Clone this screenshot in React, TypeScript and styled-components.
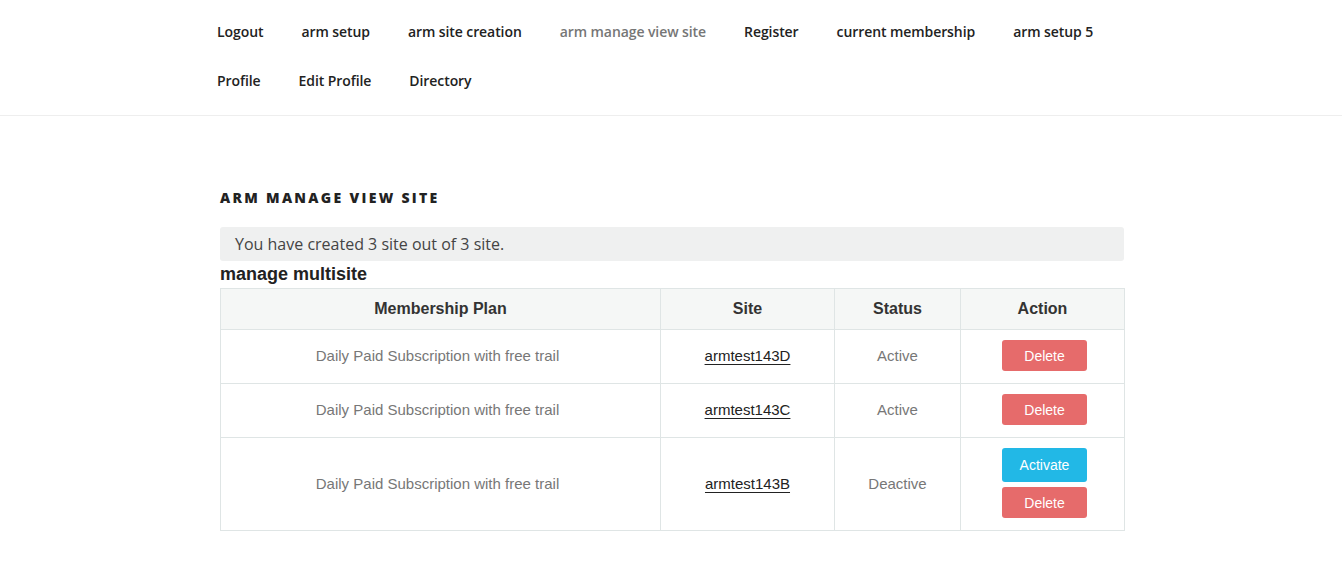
import React from "react";
import styled, { createGlobalStyle } from "styled-components";

const Global = createGlobalStyle`
  html, body { margin: 0; padding: 0; background: #fff; }
  body { font-family: "Open Sans", "Noto Sans", sans-serif; color: #333; }
  * { box-sizing: border-box; }
`;

const Header = styled.header`
  border-bottom: 1px solid #eee;
  padding: 7px 0 10px;
`;

const NavList = styled.ul`
  list-style: none;
  margin: 0 0 0 198px;
  padding: 0;
  width: 952px;
  display: flex;
  flex-wrap: wrap;
`;

const NavItem = styled.li<{ $active?: boolean }>`
  padding: 14px 19px;
  font-size: 14px;
  line-height: 21px;
  font-weight: 600;
  letter-spacing: -0.08px;
  color: ${(p) => (p.$active ? "#767676" : "#222")};
  white-space: nowrap;
`;

const Main = styled.main`
  width: 904px;
  margin: 0 0 0 220px;
  padding-top: 71px;
`;

const PageTitle = styled.h2`
  margin: 0 0 18px;
  font-size: 14px;
  line-height: 22px;
  font-weight: 800;
  letter-spacing: 0.165em;
  text-transform: uppercase;
  color: #222;
`;

const Notice = styled.div`
  background: #eff0f0;
  border-radius: 3px;
  height: 34px;
  padding: 0 15px;
  display: flex;
  align-items: center;
  font-size: 16px;
  color: #444;
`;

const SubTitle = styled.h3`
  margin: 3px 0 4px;
  font-family: "Liberation Sans", Arial, sans-serif;
  font-size: 18px;
  line-height: 20px;
  font-weight: 700;
  color: #222;
`;

const Table = styled.table`
  width: 904px;
  border-collapse: collapse;
  font-family: "Liberation Sans", Arial, sans-serif;
  table-layout: fixed;
`;

const Th = styled.th<{ $w: number }>`
  width: ${(p) => p.$w}px;
  height: 41px;
  background: #f5f7f6;
  border: 1px solid #dfe5e5;
  font-size: 16px;
  font-weight: 700;
  color: #333;
  text-align: center;
  padding: 0 8px;
`;

const Td = styled.td<{ $shift?: number }>`
  border: 1px solid #dfe5e5;
  text-align: center;
  font-size: 15px;
  color: #777;
  padding: 10px ${(p) => 8 + (p.$shift ?? 0)}px 12px ${(p) => 8 - (p.$shift ?? 0)}px;
  height: 54px;
`;

const SiteLink = styled.a`
  color: #222;
  text-decoration: underline;
  text-underline-offset: 3px;
`;

const Actions = styled.div`
  display: flex;
  flex-direction: column;
  align-items: center;
  gap: 5px;
`;

const Btn = styled.button<{ $kind: "delete" | "activate" }>`
  width: 85px;
  height: ${(p) => (p.$kind === "activate" ? 34 : 31)}px;
  border: none;
  border-radius: 3px;
  background: ${(p) => (p.$kind === "activate" ? "#22b8e6" : "#e66b6b")};
  color: #fff;
  font-family: "Liberation Sans", Arial, sans-serif;
  font-size: 14px;
  cursor: pointer;
  padding: 0;
`;

const navTop = [
  "Logout",
  "arm setup",
  "arm site creation",
  "arm manage view site",
  "Register",
  "current membership",
  "arm setup 5",
  "Profile",
  "Edit Profile",
  "Directory",
];

const rows = [
  { site: "armtest143D", status: "Active", active: true },
  { site: "armtest143C", status: "Active", active: true },
  { site: "armtest143B", status: "Deactive", active: false },
];

export default function App() {
  return (
    <>
      <Global />
      <Header>
        <nav>
          <NavList>
            {navTop.map((n) => (
              <NavItem key={n} $active={n === "arm manage view site"}>
                {n}
              </NavItem>
            ))}
          </NavList>
        </nav>
      </Header>
      <Main>
        <PageTitle>arm manage view site</PageTitle>
        <Notice>You have created 3 site out of 3 site.</Notice>
        <SubTitle>manage multisite</SubTitle>
        <Table>
          <thead>
            <tr>
              <Th $w={440}>Membership Plan</Th>
              <Th $w={174}>Site</Th>
              <Th $w={126}>Status</Th>
              <Th $w={164}>Action</Th>
            </tr>
          </thead>
          <tbody>
            {rows.map((r) => (
              <tr key={r.site}>
                <Td $shift={3}>Daily Paid Subscription with free trail</Td>
                <Td>
                  <SiteLink href="#">{r.site}</SiteLink>
                </Td>
                <Td>{r.status}</Td>
                <Td $shift={-2}>
                  <Actions>
                    {!r.active && <Btn $kind="activate">Activate</Btn>}
                    <Btn $kind="delete">Delete</Btn>
                  </Actions>
                </Td>
              </tr>
            ))}
          </tbody>
        </Table>
      </Main>
    </>
  );
}
